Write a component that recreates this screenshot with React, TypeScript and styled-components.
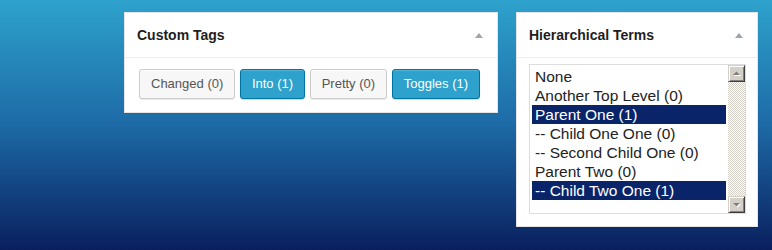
import styled, { createGlobalStyle } from 'styled-components';

const GlobalStyle = createGlobalStyle`
  html, body {
    margin: 0;
    padding: 0;
  }
  body {
    width: 772px;
    height: 250px;
    overflow: hidden;
    background: linear-gradient(to bottom, #2ea2cc 0%, #1d6aa6 50%, #0a1f5e 100%);
  }
`;

const Page = styled.div`
  display: flex;
  align-items: flex-start;
  gap: 18px;
  padding: 12px 0 0 124px;
  font-family: "Liberation Sans", Arial, sans-serif;
`;

const Card = styled.div<{ $width: number }>`
  width: ${(p) => p.$width}px;
  box-sizing: border-box;
  background: #fff;
  border: 1px solid #e5e5e5;
  box-shadow: 0 1px 1px rgba(0, 0, 0, 0.04);
`;

const Header = styled.div`
  height: 44px;
  display: flex;
  align-items: center;
  justify-content: space-between;
  padding: 0 14px 0 12px;
  border-bottom: 1px solid #eee;
`;

const Title = styled.h2`
  margin: 0;
  margin-top: -1px;
  font-family: "Liberation Sans", Arial, sans-serif;
  font-size: 14px;
  font-weight: 700;
  color: #1e1e1e;
`;

const Body = styled.div<{ $pad: string }>`
  padding: ${(p) => p.$pad};
`;

const ButtonRow = styled.div`
  display: flex;
  gap: 4.6px;
`;

const TagButton = styled.button<{ $primary?: boolean }>`
  height: 30px;
  padding: 0 11px;
  border-radius: 3px;
  font-family: "Liberation Sans", Arial, sans-serif;
  font-size: 13px;
  line-height: 28px;
  cursor: pointer;
  border: 1px solid ${(p) => (p.$primary ? '#0074a2' : '#ccc')};
  background: ${(p) => (p.$primary ? '#2ea2cc' : '#f7f7f7')};
  color: ${(p) => (p.$primary ? '#fff' : '#555')};
  box-shadow: ${(p) =>
    p.$primary
      ? 'inset 0 1px 0 rgba(120, 200, 230, 0.5), 0 1px 0 rgba(0, 0, 0, 0.15)'
      : 'inset 0 1px 0 #fff, 0 1px 0 rgba(0, 0, 0, 0.08)'};
`;

const ListBox = styled.div`
  width: 217px;
  height: 150px;
  box-sizing: border-box;
  border: 1px solid #ddd;
  display: flex;
  background: #fff;
`;

const Options = styled.div`
  flex: 1;
  padding: 2px 2px 0 2px;
`;

const Option = styled.div<{ $selected?: boolean }>`
  height: 19px;
  line-height: 19px;
  padding-left: 3px;
  font-size: 15.5px;
  white-space: nowrap;
  color: ${(p) => (p.$selected ? '#fff' : '#222')};
  background: ${(p) => (p.$selected ? '#0a246a' : 'transparent')};
`;

const ScrollBar = styled.div`
  width: 17px;
  display: flex;
  flex-direction: column;
  justify-content: space-between;
  background: repeating-conic-gradient(#d4d0c8 0 25%, #fff 0 50%) 0 0 / 2px 2px;
`;

const ScrollButton = styled.div`
  width: 17px;
  height: 17px;
  box-sizing: border-box;
  display: flex;
  align-items: center;
  justify-content: center;
  background: #d4d0c8;
  border-top: 1px solid #d4d0c8;
  border-left: 1px solid #d4d0c8;
  border-right: 1px solid #404040;
  border-bottom: 1px solid #404040;
  box-shadow: inset 1px 1px 0 #fff, inset -1px -1px 0 #808080;
`;

const Toggle = () => (
  <svg width="8" height="5" viewBox="0 0 8 5">
    <path d="M4 0 L8 5 L0 5 Z" fill="#a0a5aa" />
  </svg>
);

const Arrow = ({ down }: { down?: boolean }) => (
  <svg width="9" height="6" viewBox="0 0 9 6">
    {down ? (
      <>
        <path d="M2 2 H9 L5.5 5.5 Z" fill="#fff" />
        <path d="M1 1 H8 L4.5 4.5 Z" fill="#808080" />
      </>
    ) : (
      <>
        <path d="M5.5 1.5 L9 5 H2 Z" fill="#fff" />
        <path d="M4.5 0.5 L8 4 H1 Z" fill="#808080" />
      </>
    )}
  </svg>
);

const tags = [
  { label: 'Changed (0)', on: false },
  { label: 'Into (1)', on: true },
  { label: 'Pretty (0)', on: false },
  { label: 'Toggles (1)', on: true },
];

const terms = [
  { label: 'None', on: false },
  { label: 'Another Top Level (0)', on: false },
  { label: 'Parent One (1)', on: true },
  { label: '-- Child One One (0)', on: false },
  { label: '-- Second Child One (0)', on: false },
  { label: 'Parent Two (0)', on: false },
  { label: '-- Child Two One (1)', on: true },
];

export default function App() {
  return (
    <>
      <GlobalStyle />
      <Page>
        <Card $width={374}>
          <Header>
            <Title>Custom Tags</Title>
            <Toggle />
          </Header>
          <Body $pad="11px 14px 13px 14px">
            <ButtonRow>
              {tags.map((t) => (
                <TagButton key={t.label} $primary={t.on}>
                  {t.label}
                </TagButton>
              ))}
            </ButtonRow>
          </Body>
        </Card>
        <Card $width={242}>
          <Header>
            <Title>Hierarchical Terms</Title>
            <Toggle />
          </Header>
          <Body $pad="6px 11px 12px 12px">
            <ListBox>
              <Options>
                {terms.map((t) => (
                  <Option key={t.label} $selected={t.on}>
                    {t.label}
                  </Option>
                ))}
              </Options>
              <ScrollBar>
                <ScrollButton>
                  <Arrow />
                </ScrollButton>
                <ScrollButton>
                  <Arrow down />
                </ScrollButton>
              </ScrollBar>
            </ListBox>
          </Body>
        </Card>
      </Page>
    </>
  );
}
